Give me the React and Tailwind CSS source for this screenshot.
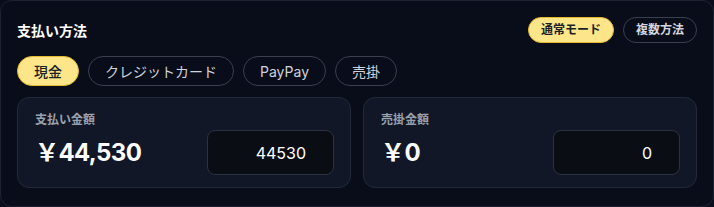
import { useState } from 'react'

const methods = ['現金', 'クレジットカード', 'PayPay', '売掛']

function AmountCard({ label, amount, value }) {
  return (
    <div className="flex-1 rounded-xl border border-[#222a3a] bg-[#111726] pl-[17px] pr-4 pt-[14px] pb-[12px]">
      <div className="text-[12px] font-bold leading-4 text-[#9aa1ad]">{label}</div>
      <div className="mt-[1px] flex items-center justify-between">
        <div className="pt-[2px] text-[24px] font-bold tracking-tight text-white">{amount}</div>
        <input
          type="text"
          defaultValue={value}
          className="mt-[1px] h-[45px] w-[127px] rounded-lg border border-[#2b3242] bg-[#0a0d14] pr-[27px] text-right text-[16px] text-white outline-none"
        />
      </div>
    </div>
  )
}

function App() {
  const [method, setMethod] = useState('現金')
  const [mode, setMode] = useState('normal')

  return (
    <div
      className="h-[207px] w-[714px] bg-[#0a0e1a]"
      style={{ fontFamily: 'Inter, "Noto Sans CJK JP", sans-serif' }}
    >
      <div className="h-full rounded-xl border border-[#1d2333] bg-[#090d1a] px-4 pt-[16px]">
        {/* Header */}
        <div className="flex items-center justify-between">
          <h2 className="text-[14px] font-bold text-white">支払い方法</h2>
          <div className="flex gap-[9px]">
            <button
              onClick={() => setMode('normal')}
              className={`h-[26px] rounded-full border px-[12px] text-[12px] font-bold ${
                mode === 'normal'
                  ? 'border-[#e6b92e] bg-[#fde68a] text-[#1c1f26]'
                  : 'border-[#3a4050] text-[#d4d7dd]'
              }`}
            >
              通常モード
            </button>
            <button
              onClick={() => setMode('multi')}
              className={`h-[26px] rounded-full border px-[12px] text-[12px] font-bold ${
                mode === 'multi'
                  ? 'border-[#e6b92e] bg-[#fde68a] text-[#1c1f26]'
                  : 'border-[#3a4050] text-[#d4d7dd]'
              }`}
            >
              複数方法
            </button>
          </div>
        </div>

        {/* Methods */}
        <div className="mt-[13px] flex gap-[9px]">
          {methods.map(m => (
            <button
              key={m}
              onClick={() => setMethod(m)}
              className={`h-[30px] rounded-full border px-4 text-[14px] ${
                method === m
                  ? 'border-[#e6b92e] bg-[#fde68a] font-medium text-[#1c1f26]'
                  : 'border-[#3a4050] text-[#cfd3da]'
              }`}
            >
              {m}
            </button>
          ))}
        </div>

        {/* Amounts */}
        <div className="mt-[11px] flex gap-[12px]">
          <AmountCard label="支払い金額" amount="￥44,530" value="44530" />
          <AmountCard label="売掛金額" amount="￥0" value="0" />
        </div>
      </div>
    </div>
  )
}

export default App
